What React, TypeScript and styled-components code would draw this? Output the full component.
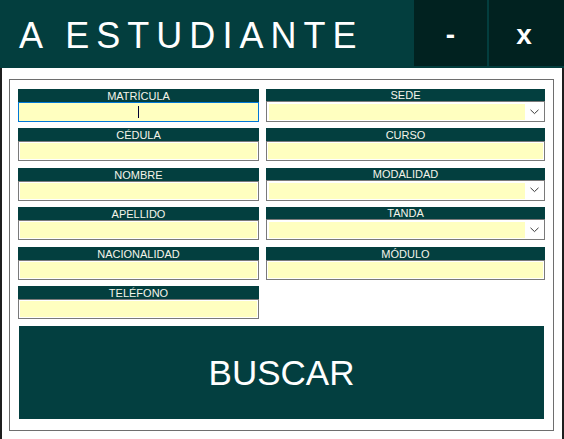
import React from "react";
import styled, { createGlobalStyle } from "styled-components";

const GlobalStyle = createGlobalStyle`
  html, body { margin: 0; padding: 0; background: #ffffff; }
  body { font-family: "Liberation Sans", Arial, sans-serif; }
  * { box-sizing: border-box; }
`;

const Window = styled.div`
  width: 564px;
  height: 439px;
  background: #ffffff;
  display: flex;
  flex-direction: column;
  overflow: hidden;
`;

const TitleBar = styled.div`
  height: 68px;
  flex: none;
  background: #033e3e;
  display: flex;
  align-items: flex-start;
`;

const Title = styled.div`
  flex: 1;
  height: 66px;
  display: flex;
  align-items: center;
  padding-left: 19px;
  padding-top: 6px;
  color: #ffffff;
  font-size: 36px;
  letter-spacing: 7.05px;
  white-space: nowrap;
  overflow: hidden;
`;

const WinButton = styled.div<{ $w: number; $shift?: number }>`
  width: ${(p) => p.$w}px;
  height: 66px;
  flex: none;
  margin-left: 2px;
  background: #012220;
  color: #ffffff;
  font-weight: bold;
  font-size: 28px;
  display: flex;
  align-items: center;
  justify-content: center;
  padding-top: 4px;
  padding-right: ${(p) => p.$shift ?? 0}px;
`;

const Body = styled.div`
  flex: 1;
  border-left: 2px solid #1e1e1e;
  border-right: 2px solid #1e1e1e;
  padding: 11px 8px 8px 7px;
`;

const Frame = styled.div`
  width: 545px;
  height: 352px;
  border: 1px solid #6e6e6e;
  padding: 9px 8px 11px 8px;
  display: flex;
  flex-direction: column;
`;

const Columns = styled.div`
  display: flex;
  gap: 7px;
  height: 230px;
`;

const Column = styled.div<{ $w: number }>`
  width: ${(p) => p.$w}px;
  display: flex;
  flex-direction: column;
  gap: 6.4px;
`;

const Field = styled.div`
  display: flex;
  flex-direction: column;
  height: 33px;
  flex: none;
`;

const Label = styled.div<{ $h: number }>`
  height: ${(p) => p.$h}px;
  background: #033f3f;
  color: #f4f4ea;
  font-size: 11px;
  line-height: ${(p) => p.$h + 1}px;
  text-align: center;
  overflow: hidden;
`;

const TextBox = styled.div<{ $focused?: boolean }>`
  height: 20px;
  background: #ffffc0;
  border: 1px solid ${(p) => (p.$focused ? "#0078d7" : "#7a7a7a")};
  box-shadow: ${(p) => (p.$focused ? "none" : "inset 0 0 0 1px #ffffff")};
  display: flex;
  align-items: center;
  justify-content: center;
`;

const Caret = styled.span`
  width: 1px;
  height: 12px;
  background: #000033;
`;

const Combo = styled.div`
  height: 21px;
  background: #ffffff;
  border: 1px solid #7a7a7a;
  padding: 2px 0 1px 2px;
  display: flex;
`;

const ComboFill = styled.div`
  flex: 1;
  background: #ffffc0;
`;

const ComboArrow = styled.div`
  width: 19px;
  display: flex;
  align-items: center;
  justify-content: center;
  padding-bottom: 1px;
`;

const SearchButton = styled.div`
  margin: 7px 1px 0 1px;
  height: 93px;
  background: #033f40;
  color: #ffffff;
  font-size: 35px;
  display: flex;
  align-items: center;
  justify-content: center;
`;

type FieldDef = { label: string; kind: "text" | "combo"; focused?: boolean };

const left: FieldDef[] = [
  { label: "MATRÍCULA", kind: "text", focused: true },
  { label: "CÉDULA", kind: "text" },
  { label: "NOMBRE", kind: "text" },
  { label: "APELLIDO", kind: "text" },
  { label: "NACIONALIDAD", kind: "text" },
  { label: "TELÉFONO", kind: "text" },
];

const right: FieldDef[] = [
  { label: "SEDE", kind: "combo" },
  { label: "CURSO", kind: "text" },
  { label: "MODALIDAD", kind: "combo" },
  { label: "TANDA", kind: "combo" },
  { label: "MÓDULO", kind: "text" },
];

const Chevron = () => (
  <svg width="9" height="6" viewBox="0 0 9 6">
    <path d="M0.5 0.8 L4.5 4.6 L8.5 0.8" fill="none" stroke="#3a3a3a" strokeWidth="1" />
  </svg>
);

const FieldView = ({ f }: { f: FieldDef }) => (
  <Field>
    <Label $h={f.kind === "combo" ? 12 : 13}>{f.label}</Label>
    {f.kind === "combo" ? (
      <Combo>
        <ComboFill />
        <ComboArrow>
          <Chevron />
        </ComboArrow>
      </Combo>
    ) : (
      <TextBox $focused={f.focused}>{f.focused && <Caret />}</TextBox>
    )}
  </Field>
);

export default function App() {
  return (
    <>
      <GlobalStyle />
      <Window>
        <TitleBar>
          <Title>A ESTUDIANTE</Title>
          <WinButton $w={73}>-</WinButton>
          <WinButton $w={75} $shift={5}>x</WinButton>
        </TitleBar>
        <Body>
          <Frame>
            <Columns>
              <Column $w={241}>
                {left.map((f) => (
                  <FieldView key={f.label} f={f} />
                ))}
              </Column>
              <Column $w={279}>
                {right.map((f) => (
                  <FieldView key={f.label} f={f} />
                ))}
              </Column>
            </Columns>
            <SearchButton>BUSCAR</SearchButton>
          </Frame>
        </Body>
      </Window>
    </>
  );
}
